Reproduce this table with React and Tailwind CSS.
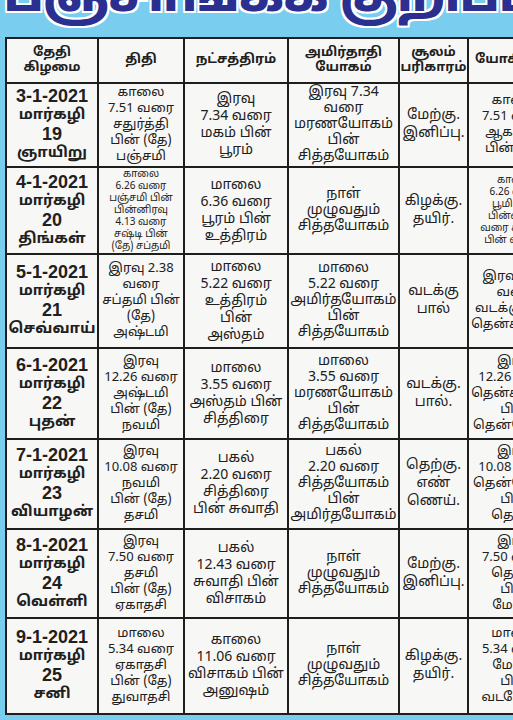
import React from "react";

const header = [
  ["தேதி", "கிழமை"],
  ["திதி"],
  ["நட்சத்திரம்"],
  ["அமிர்தாதி", "யோகம்"],
  ["சூலம்", "பரிகாரம்"],
  ["யோகினி"],
];

const rows = [
  {
    h: "h-[82px]",
    date: ["3-1-2021", "மார்கழி", "19", "ஞாயிறு"],
    thithi: ["காலை", "7.51 வரை", "சதுர்த்தி", "பின் (தே)", "பஞ்சமி"],
    star: ["இரவு", "7.34 வரை", "மகம் பின்", "பூரம்"],
    yogam: ["இரவு 7.34", "வரை", "மரணயோகம்", "பின்", "சித்தயோகம்"],
    soolam: ["மேற்கு.", "இனிப்பு."],
    last: ["காலை", "7.51 வரை", "ஆகாயம்", "பின் பூமி"],
  },
  {
    h: "h-[85px]",
    date: ["4-1-2021", "மார்கழி", "20", "திங்கள்"],
    thithi: ["காலை", "6.26 வரை", "பஞ்சமி பின்", "பின்னிரவு", "4.13 வரை", "சஷ்டி பின்", "(தே) சப்தமி"],
    small: true,
    star: ["மாலை", "6.36 வரை", "பூரம் பின்", "உத்திரம்"],
    yogam: ["நாள்", "முழுவதும்", "சித்தயோகம்"],
    soolam: ["கிழக்கு.", "தயிர்."],
    last: ["காலை", "6.26 வரை", "பூமி பின்", "பின்னிரவு", "வரை கிழக்கு", "பின் வடக்கு"],
    lastSmall: true,
  },
  {
    h: "h-[92px]",
    date: ["5-1-2021", "மார்கழி", "21", "செவ்வாய்"],
    thithi: ["இரவு 2.38", "வரை", "சப்தமி பின்", "(தே)", "அஷ்டமி"],
    star: ["மாலை", "5.22 வரை", "உத்திரம்", "பின்", "அஸ்தம்"],
    yogam: ["மாலை", "5.22 வரை", "அமிர்தயோகம்", "பின்", "சித்தயோகம்"],
    soolam: ["வடக்கு", "பால்"],
    last: ["இரவு 2.38", "வரை", "வடக்கு பின்", "தென்கிழக்கு"],
  },
  {
    h: "h-[89px]",
    date: ["6-1-2021", "மார்கழி", "22", "புதன்"],
    thithi: ["இரவு", "12.26 வரை", "அஷ்டமி", "பின் (தே)", "நவமி"],
    star: ["மாலை", "3.55 வரை", "அஸ்தம் பின்", "சித்திரை"],
    yogam: ["மாலை", "3.55 வரை", "மரணயோகம்", "பின்", "சித்தயோகம்"],
    soolam: ["வடக்கு.", "பால்."],
    last: ["இரவு", "12.26 வரை", "தென்கிழக்கு", "பின்", "தென்மேற்கு"],
  },
  {
    h: "h-[88px]",
    date: ["7-1-2021", "மார்கழி", "23", "வியாழன்"],
    thithi: ["இரவு", "10.08 வரை", "நவமி", "பின் (தே)", "தசமி"],
    star: ["பகல்", "2.20 வரை", "சித்திரை", "பின் சுவாதி"],
    yogam: ["பகல்", "2.20 வரை", "சித்தயோகம்", "பின்", "அமிர்தயோகம்"],
    soolam: ["தெற்கு.", "எண்", "ணெய்."],
    last: ["இரவு", "10.08 வரை", "தென்மேற்கு", "பின்", "தெற்கு"],
  },
  {
    h: "h-[87px]",
    date: ["8-1-2021", "மார்கழி", "24", "வெள்ளி"],
    thithi: ["இரவு", "7.50 வரை", "தசமி", "பின் (தே)", "ஏகாதசி"],
    star: ["பகல்", "12.43 வரை", "சுவாதி பின்", "விசாகம்"],
    yogam: ["நாள்", "முழுவதும்", "சித்தயோகம்"],
    soolam: ["மேற்கு.", "இனிப்பு."],
    last: ["இரவு", "7.50 வரை", "தெற்கு", "பின்", "மேற்கு"],
  },
  {
    h: "h-[94px]",
    date: ["9-1-2021", "மார்கழி", "25", "சனி"],
    thithi: ["மாலை", "5.34 வரை", "ஏகாதசி", "பின் (தே)", "துவாதசி"],
    star: ["காலை", "11.06 வரை", "விசாகம் பின்", "அனுஷம்"],
    yogam: ["நாள்", "முழுவதும்", "சித்தயோகம்"],
    soolam: ["கிழக்கு.", "தயிர்."],
    last: ["மாலை", "5.34 வரை", "மேற்கு", "பின்", "வடமேற்கு"],
  },
];

const Cell = ({ lines, className = "" }) => (
  <div
    className={`bg-[#f7f7f5] flex flex-col items-center justify-center text-center text-[#202020] whitespace-nowrap overflow-hidden ${className}`}
  >
    {lines.map((l, i) => (
      <span key={i}>{l}</span>
    ))}
  </div>
);

const App = () => {
  return (
    <div className="w-[513px] h-[720px] overflow-hidden bg-[#79cdef] font-['Noto_Sans_Tamil','Noto_Sans','Liberation_Sans',sans-serif]">
      <div className="h-[37px] overflow-hidden flex items-end pl-1">
        <div className="mb-[14px] text-[46px] font-black leading-[46px] text-[#2b2f8f] whitespace-nowrap [text-shadow:2px_2px_0_#fff,-2px_-2px_0_#fff,2px_-2px_0_#fff,-2px_2px_0_#fff]">
          பஞ்சாங்கக் குறிப்புகள் பு
        </div>
      </div>
      <div className="ml-[5px] w-[600px] bg-[#1e1e1e] p-[2px] grid grid-cols-[90px_84px_102px_109px_67px_92px_40px] gap-[2px]">
        {header.map((lines, i) => (
          <Cell
            key={i}
            lines={lines}
            className={`h-[43px] text-[13px] leading-[15px] font-bold ${i === 5 ? "col-span-2 items-start pl-[6px]" : ""}`}
          />
        ))}
        {rows.map((r, i) => (
          <React.Fragment key={i}>
            <Cell
              lines={r.date}
              className={`${r.h} font-bold text-[15px] leading-[19px] [&>span:first-child]:font-['Liberation_Sans'] [&>span:first-child]:text-[18px] [&>span:nth-child(3)]:font-['Liberation_Sans'] [&>span:nth-child(3)]:text-[18px]`}
            />
            <Cell
              lines={r.thithi}
              className={`${r.h} ${r.small ? "text-[10px] leading-[12px]" : "text-[13px] leading-[16px]"}`}
            />
            <Cell lines={r.star} className={`${r.h} text-[14px] leading-[17px]`} />
            <Cell lines={r.yogam} className={`${r.h} text-[14px] leading-[16px]`} />
            <Cell lines={r.soolam} className={`${r.h} text-[14px] leading-[18px]`} />
            <Cell
              lines={r.last}
              className={`${r.h} ${r.lastSmall ? "text-[10px] leading-[12px]" : "text-[13px] leading-[16px]"}`}
            />
            <Cell lines={[""]} className={r.h} />
          </React.Fragment>
        ))}
      </div>
    </div>
  );
};

export default App;
